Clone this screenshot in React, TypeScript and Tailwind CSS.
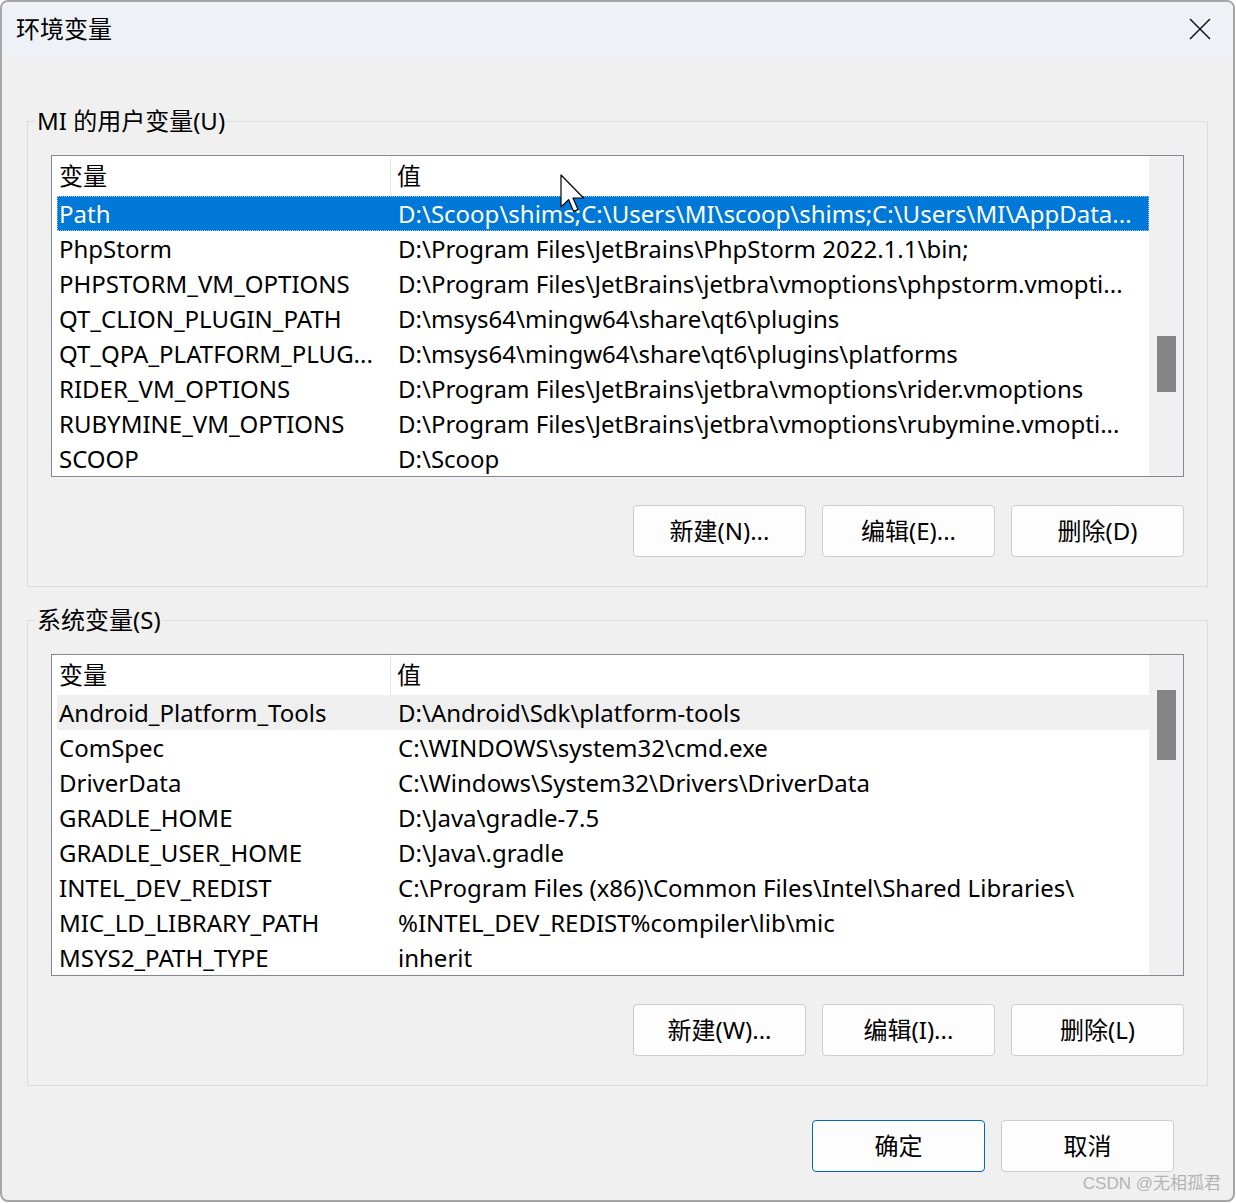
const userVars: [string, string][] = [
  ["Path", "D:\\Scoop\\shims;C:\\Users\\MI\\scoop\\shims;C:\\Users\\MI\\AppData..."],
  ["PhpStorm", "D:\\Program Files\\JetBrains\\PhpStorm 2022.1.1\\bin;"],
  ["PHPSTORM_VM_OPTIONS", "D:\\Program Files\\JetBrains\\jetbra\\vmoptions\\phpstorm.vmopti..."],
  ["QT_CLION_PLUGIN_PATH", "D:\\msys64\\mingw64\\share\\qt6\\plugins"],
  ["QT_QPA_PLATFORM_PLUG...", "D:\\msys64\\mingw64\\share\\qt6\\plugins\\platforms"],
  ["RIDER_VM_OPTIONS", "D:\\Program Files\\JetBrains\\jetbra\\vmoptions\\rider.vmoptions"],
  ["RUBYMINE_VM_OPTIONS", "D:\\Program Files\\JetBrains\\jetbra\\vmoptions\\rubymine.vmopti..."],
  ["SCOOP", "D:\\Scoop"],
];

const sysVars: [string, string][] = [
  ["Android_Platform_Tools", "D:\\Android\\Sdk\\platform-tools"],
  ["ComSpec", "C:\\WINDOWS\\system32\\cmd.exe"],
  ["DriverData", "C:\\Windows\\System32\\Drivers\\DriverData"],
  ["GRADLE_HOME", "D:\\Java\\gradle-7.5"],
  ["GRADLE_USER_HOME", "D:\\Java\\.gradle"],
  ["INTEL_DEV_REDIST", "C:\\Program Files (x86)\\Common Files\\Intel\\Shared Libraries\\"],
  ["MIC_LD_LIBRARY_PATH", "%INTEL_DEV_REDIST%compiler\\lib\\mic"],
  ["MSYS2_PATH_TYPE", "inherit"],
];

function ListView({ rows, selected, hovered, thumbTop, thumbHeight }: { rows: [string, string][]; selected?: number; hovered?: number; thumbTop: number; thumbHeight: number }) {
  return (
    <div className="flex h-[322px] border border-[#828790] bg-white">
      <div className="flex-1 flex flex-col">
        <div className="flex h-[40px] items-center ml-[5px]">
          <div className="w-[334px] h-full flex items-center pl-[2px] border-r border-[#e5e5e5]">变量</div>
          <div className="pl-[6px]">值</div>
        </div>
        {rows.map(([name, value], i) => (
          <div
            key={name}
            className={
              "flex h-[35px] items-center ml-[5px] whitespace-nowrap overflow-hidden " +
              (i === selected
                ? "bg-[#0078d7] text-white outline-1 outline-dotted outline-[#a0c4ec] -outline-offset-1"
                : i === hovered
                ? "bg-[#efefef]"
                : "")
            }
          >
            <div className="w-[334px] pl-[2px] overflow-hidden">{name}</div>
            <div className="pl-[7px]">{value}</div>
          </div>
        ))}
      </div>
      <div className="w-[34px] bg-[#f0f0f0] flex flex-col items-center">
        <div className="w-[19px] bg-[#858585]" style={{ marginTop: thumbTop, height: thumbHeight }} />
      </div>
    </div>
  );
}

function Btn({ label, primary }: { label: string; primary?: boolean }) {
  return (
    <div
      className={
        "w-[173px] h-[52px] rounded-[4px] bg-[#fdfdfd] flex items-center justify-center " +
        (primary ? "border-[1.5px] border-[#0067c0]" : "border border-[#cccccc]")
      }
    >
      {label}
    </div>
  );
}

function GroupBox({ title, children }: { title: string; children: React.ReactNode }) {
  return (
    <div className="relative border border-[#dcdcdc] px-[23px] pt-[33px] pb-[29px]">
      <div className="absolute left-[7px] -top-[18px] bg-[#f0f0f0] px-[2px] leading-[34px]">{title}</div>
      {children}
    </div>
  );
}

export default function App() {
  return (
    <div className="w-[1236px] h-[1203px] bg-white font-['Noto_Sans','Noto_Sans_CJK_SC',sans-serif] text-[24px] text-black">
      <div className="relative w-[1235px] h-[1202px] border-2 border-[#a6a6a6] rounded-[8px] overflow-hidden bg-[#f0f0f0] flex flex-col">
        <div className="h-[56px] bg-[#eef2f7] flex items-center justify-between pl-[14px] pr-[20px] pb-[2px]">
          <span>环境变量</span>
          <svg width="22" height="22" viewBox="0 0 22 22" className="mr-[2px]">
            <path d="M1 1 L21 21 M21 1 L1 21" stroke="#1a1a1a" strokeWidth="1.6" />
          </svg>
        </div>

        <div className="flex flex-col px-[25px] pt-[63px] gap-[33px]">
          <GroupBox title="MI 的用户变量(U)">
            <ListView rows={userVars} selected={0} thumbTop={180} thumbHeight={56} />
            <div className="flex justify-end gap-[16px] mt-[28px]">
              <Btn label="新建(N)..." />
              <Btn label="编辑(E)..." />
              <Btn label="删除(D)" />
            </div>
          </GroupBox>

          <GroupBox title="系统变量(S)">
            <ListView rows={sysVars} hovered={0} thumbTop={35} thumbHeight={70} />
            <div className="flex justify-end gap-[16px] mt-[28px]">
              <Btn label="新建(W)..." />
              <Btn label="编辑(I)..." />
              <Btn label="删除(L)" />
            </div>
          </GroupBox>
        </div>

        <div className="flex justify-end gap-[16px] pr-[59px] mt-[34px]">
          <Btn label="确定" primary />
          <Btn label="取消" />
        </div>

        <div className="absolute right-[12px] bottom-[4px] text-[17px] text-[#b4b4b4] font-['Liberation_Sans','Noto_Sans_CJK_SC',sans-serif]">
          CSDN @无相孤君
        </div>

        <svg className="absolute left-[558px] top-[172px]" width="26" height="40" viewBox="0 0 13 20">
          <path d="M0.5 0.5 L0.5 16.5 L4.3 12.8 L6.8 18.7 L9 17.8 L6.5 12 L11.8 12 Z" fill="white" stroke="black" strokeWidth="0.6" strokeLinejoin="round" />
        </svg>
      </div>
    </div>
  );
}
